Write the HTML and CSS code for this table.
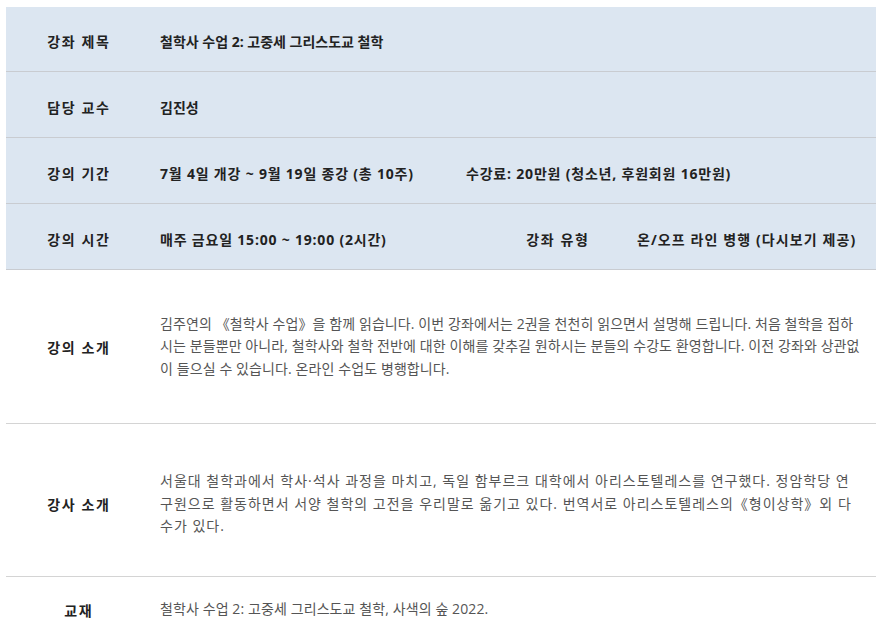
FILE: index.html
```html
<!DOCTYPE html>
<html lang="ko">
<head>
<meta charset="utf-8">
<title>강좌 안내</title>
<link rel="stylesheet" href="styles.css">
</head>
<body>
<div class="page">
  <div class="info">
    <div class="row head first">
      <div class="label">강좌 제목</div>
      <div class="value">철학사 수업 2: 고중세 그리스도교 철학</div>
    </div>
    <div class="row head">
      <div class="label">담당 교수</div>
      <div class="value">김진성</div>
    </div>
    <div class="row head">
      <div class="label">강의 기간</div>
      <div class="value period wide">7월 4일 개강 ~ 9월 19일 종강 (총 10주)</div>
      <div class="value wide">수강료: 20만원 (청소년, 후원회원 16만원)</div>
    </div>
    <div class="row head">
      <div class="label">강의 시간</div>
      <div class="value time wide">매주 금요일 15:00 ~ 19:00 (2시간)</div>
      <div class="label sub">강좌 유형</div>
      <div class="value wide type">온/오프 라인 병행 (다시보기 제공)</div>
    </div>
    <div class="row desc">
      <div class="label">강의 소개</div>
      <div class="text">김주연의 《철학사 수업》을 함께 읽습니다. 이번 강좌에서는 2권을 천천히 읽으면서 설명해 드립니다. 처음 철학을 접하<br>시는 분들뿐만 아니라, 철학사와 철학 전반에 대한 이해를 갖추길 원하시는 분들의 수강도 환영합니다. 이전 강좌와 상관없<br>이 들으실 수 있습니다. 온라인 수업도 병행합니다.</div>
    </div>
    <div class="row desc lecturer">
      <div class="label">강사 소개</div>
      <div class="text spaced">서울대 철학과에서 학사·석사 과정을 마치고, 독일 함부르크 대학에서 아리스토텔레스를 연구했다. 정암학당 연<br>구원으로 활동하면서 서양 철학의 고전을 우리말로 옮기고 있다. 번역서로 아리스토텔레스의《형이상학》외 다<br>수가 있다.</div>
    </div>
    <div class="row desc book">
      <div class="label">교재</div>
      <div class="text">철학사 수업 2: 고중세 그리스도교 철학, 사색의 숲 2022.</div>
    </div>
  </div>
</div>
</body>
</html>
```

FILE: styles.css
```css
* {
  box-sizing: border-box;
}

html, body {
  margin: 0;
  padding: 0;
  background: #ffffff;
}

body {
  font-family: "Open Sans", "Noto Sans CJK KR", sans-serif;
  font-size: 14px;
  color: #222222;
}

.page {
  padding: 7px 6px 0 6px;
}

.info {
  display: flex;
  flex-direction: column;
}

.row {
  display: flex;
  align-items: center;
  border-bottom: 1px solid #c9ccd1;
}

.row.head {
  background: #dce6f1;
  height: 66px;
  padding-top: 4px;
  font-weight: 700;
}

.row.head.first {
  height: 65px;
}

.label {
  flex: 0 0 144px;
  text-align: center;
  font-weight: 700;
  letter-spacing: 1.6px;
  text-indent: 1.6px;
  color: #222222;
}

.value {
  padding-left: 10px;
  color: #222222;
}

.value.wide {
  letter-spacing: 0.8px;
}

.value.type {
  letter-spacing: 1.1px;
}

.value.period {
  flex: 0 0 306px;
}

.value.time {
  flex: 0 0 337px;
}

.label.sub {
  flex: 0 0 140px;
  padding-left: 0;
}

.row.desc {
  border-bottom-color: #d4d4d4;
  padding: 43px 0;
}

.row.lecturer {
  padding: 46px 0 39px;
}

.row.book {
  border-bottom: none;
  padding: 21px 0;
}

.text {
  flex: 1;
  padding-left: 10px;
  padding-right: 4px;
  line-height: 22.4px;
  color: #555555;
  letter-spacing: 0.1px;
  white-space: nowrap;
}

.text.spaced {
  letter-spacing: 1px;
}
```
